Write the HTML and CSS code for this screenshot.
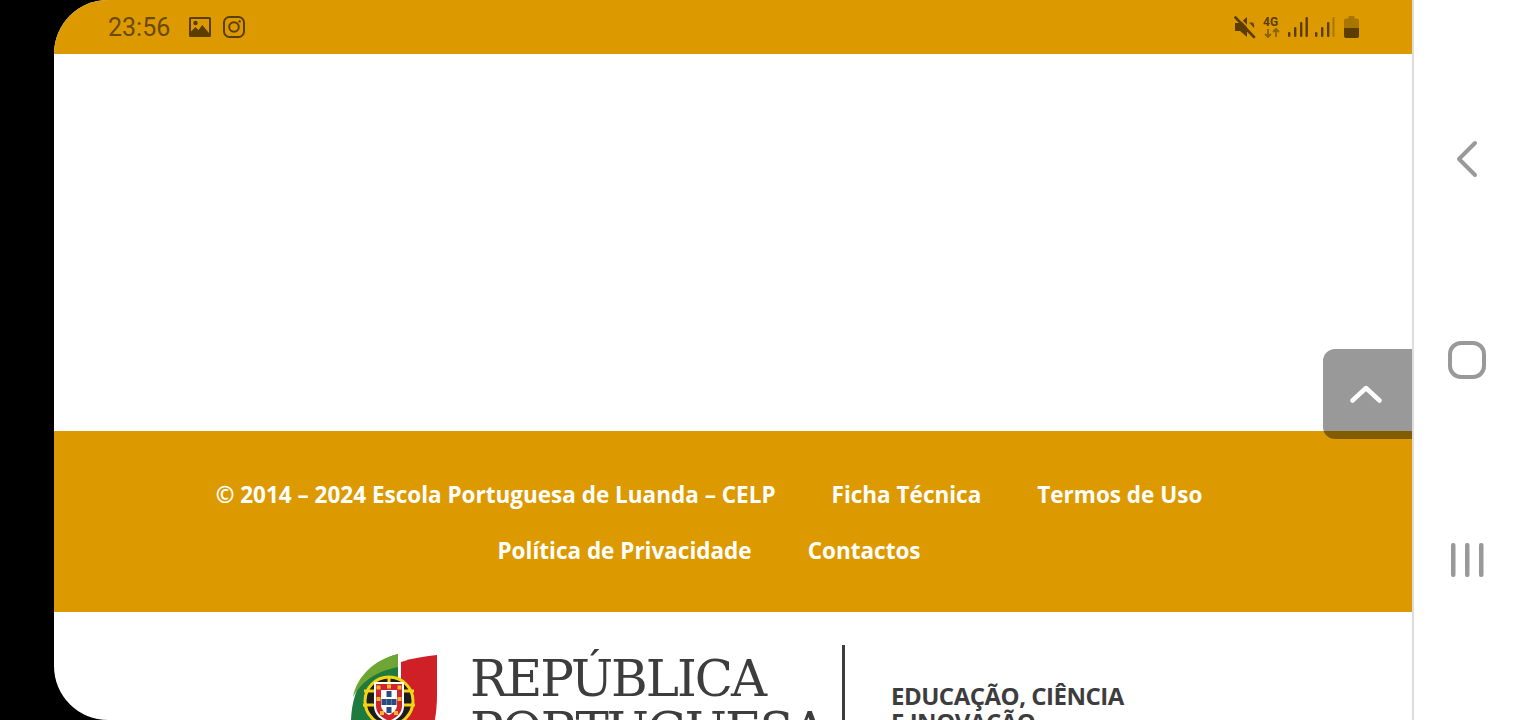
FILE: index.html
```html
<!DOCTYPE html>
<html lang="pt">
<head>
<meta charset="utf-8">
<title>Escola Portuguesa de Luanda</title>
<link rel="stylesheet" href="styles.css">
</head>
<body>
<div class="device">
  <main class="screen">
    <header class="status">
      <div class="status-left">
        <span class="time">23:56</span>
        <svg class="ico-img" width="22" height="20" viewBox="0 0 22 20"><path fill="#5c3d00" fill-rule="evenodd" d="M1.5 0h19A1.5 1.5 0 0 1 22 1.5v17a1.5 1.5 0 0 1-1.500 1.500h-19A1.500 1.500 0 0 1 0 18.500v-17A1.500 1.500 0 0 1 1.500 0zM2 2v12.500l4.500-4.500 3 3 3.800-5 6.700 8V2z"/><circle cx="6.500" cy="6" r="2.200" fill="#5c3d00"/></svg>
        <svg class="ico-ig" width="22" height="22" viewBox="0 0 22 22" fill="none" stroke="#5c3d00" stroke-width="2"><rect x="1" y="1" width="20" height="20" rx="5.500"/><circle cx="11" cy="11" r="4.800"/><circle cx="16.600" cy="5.400" r="1.200" fill="#5c3d00" stroke="none"/></svg>
      </div>
      <div class="status-right">
        <svg width="22" height="24" viewBox="0 0 22 24"><path fill="#5c3d00" d="M1 8h5l7-6v20l-7-6H1z"/><path stroke="#5c3d00" stroke-width="2.600" stroke-linecap="round" d="M1.500 2.500 20 22"/><path stroke="#dd9a00" stroke-width="1.600" d="M4 1.500 21 19.500"/><path fill="#5c3d00" d="M15 7.500l5 5.500c.5-2 .2-4-1-5.500z" opacity=".9"/></svg>
        <svg class="ico-net" width="18" height="24" viewBox="0 0 18 24"><text class="net-label" x="0" y="11">4G</text><path fill="none" stroke="#8a6200" stroke-width="1.800" d="M5 14v8M2 19l3 3 3-3M13 22v-8M10 17l3-3 3 3"/></svg>
        <svg width="20" height="22" viewBox="0 0 20 22"><g fill="#5c3d00"><rect x="0" y="16" width="2.400" height="5" rx="1"/><rect x="6" y="11" width="2.400" height="10" rx="1"/><rect x="12" y="6" width="2.400" height="15" rx="1"/><rect x="17.500" y="1" width="2.400" height="20" rx="1"/></g></svg>
        <svg width="20" height="22" viewBox="0 0 20 22"><g fill="#5c3d00"><rect x="0" y="16" width="2.400" height="5" rx="1"/><rect x="6" y="11" width="2.400" height="10" rx="1"/><rect x="12" y="6" width="2.400" height="15" rx="1"/></g><rect x="17.500" y="1" width="2" height="20" rx="1" fill="#a87600"/></svg>
        <svg class="ico-batt" width="15" height="22" viewBox="0 0 15 22"><path fill="#a87600" d="M4.500 0h6v2.500H13A2 2 0 0 1 15 4.500V12H0V4.500a2 2 0 0 1 2-2h2.500z"/><path fill="#5c3d00" d="M0 12h15v8a2 2 0 0 1-2 2H2a2 2 0 0 1-2-2z"/></svg>
      </div>
    </header>

    <section class="content"></section>

    <footer class="site-footer">
      <nav class="footer-links">
        <span class="flink">© 2014 – 2024 Escola Portuguesa de Luanda – CELP</span>
        <a class="flink">Ficha Técnica</a>
        <a class="flink">Termos de Uso</a>
        <a class="flink">Política de Privacidade</a>
        <a class="flink">Contactos</a>
      </nav>
    </footer>

    <section class="gov">
      <svg class="gov-mark" width="88" height="112" viewBox="0 0 88 112">
        <path fill="#1f7a3d" d="M47 1C20 8 0 32 0 70v42h47z"/>
        <path fill="#6fa534" d="M47 1C22 7 6 24 2 44 12 26 28 18 47 14z"/>
        <path fill="#cf2027" d="M50 9c12-4 25-6 36-7v40c0 30-8 50-22 70H50z"/>
        <circle cx="38" cy="48" r="23" fill="#1c1c1c"/>
        <circle cx="38" cy="48" r="24" fill="none" stroke="#f5d312" stroke-width="3"/>
        <path fill="none" stroke="#f5d312" stroke-width="3" d="M13 38h50M12 52h52M38 24v48"/>
        <path fill="#fff" d="M23 29h30v24c0 9-7 14-15 17-8-3-15-8-15-17z"/>
        <path fill="#d2232a" d="M25 31h26v22c0 7-6 12-13 15-7-3-13-8-13-15z"/>
        <path fill="#fff" d="M30 37h16v15c0 5-4 8-8 10-4-2-8-5-8-10z"/>
        <g fill="#2a4b80"><rect x="35.500" y="38" width="5" height="6"/><rect x="30.500" y="46" width="5" height="6"/><rect x="35.500" y="46" width="5" height="6"/><rect x="40.500" y="46" width="5" height="6"/><rect x="35.500" y="54" width="5" height="6"/></g>
        <g fill="#f2b632"><rect x="25.500" y="32.500" width="4" height="4"/><rect x="36" y="31.500" width="4" height="4"/><rect x="46.500" y="32.500" width="4" height="4"/><rect x="25.500" y="44" width="4" height="4"/><rect x="46.500" y="44" width="4" height="4"/><rect x="29" y="58" width="4" height="4"/><rect x="43" y="58" width="4" height="4"/></g>
      </svg>
      <div class="gov-name">REPÚBLICA<br>PORTUGUESA</div>
      <div class="gov-rule"></div>
      <div class="gov-dept">EDUCAÇÃO, CIÊNCIA<br>E INOVAÇÃO</div>
    </section>

    <button class="to-top" aria-label="Voltar ao topo">
      <svg width="32" height="18" viewBox="0 0 32 18" fill="none" stroke="#fff" stroke-width="4.500" stroke-linecap="round" stroke-linejoin="round"><path d="M2.500 15.500 16 3l13.500 12.500"/></svg>
    </button>
  </main>

  <aside class="navbar">
    <svg width="24" height="38" viewBox="0 0 24 38" fill="none" stroke="#999" stroke-width="4" stroke-linecap="round" stroke-linejoin="round"><path d="M20 3 4 19l16 16"/></svg>
    <svg width="38" height="38" viewBox="0 0 38 38" fill="none" stroke="#999" stroke-width="4"><rect x="2" y="2" width="34" height="34" rx="11"/></svg>
    <svg width="34" height="36" viewBox="0 0 34 36" fill="#999"><rect x="1" y="1" width="4.500" height="34" rx="2"/><rect x="15" y="1" width="4.500" height="34" rx="2"/><rect x="29" y="1" width="4.500" height="34" rx="2"/></svg>
  </aside>
</div>
</body>
</html>
```

FILE: styles.css
```css
* { box-sizing: border-box; }
html, body { margin: 0; height: 720px; overflow: hidden; background: #000; }

.device { display: flex; width: 1520px; height: 720px; padding-left: 54px; background: #000; }

.screen {
  position: relative;
  width: 1358px;
  height: 720px;
  overflow: hidden;
  display: flex;
  flex-direction: column;
  background: #fff;
  border-radius: 54px 0 0 54px;
}

.status {
  flex: none;
  height: 54px;
  background: #dd9a00;
  display: flex;
  align-items: center;
  justify-content: space-between;
  padding: 0 53px 0 54px;
}
.status-left { display: flex; align-items: center; }
.time { font: 400 25px/1 Roboto, sans-serif; color: #6b4a00; width: 81px; }
.ico-ig { margin-left: 12px; }
.status-right { display: flex; align-items: center; gap: 7px; }
.net-label { font: 700 12px Roboto, sans-serif; fill: #5c3d00; }
.ico-batt { margin-left: 2px; }

.content { flex: none; height: 377px; background: #fff; }

.site-footer {
  flex: none;
  height: 181px;
  background: #dd9a00;
  padding: 36px 48px 0 0;
}
.footer-links {
  width: 1200px;
  margin: 0 auto;
  display: flex;
  flex-wrap: wrap;
  justify-content: center;
  column-gap: 56px;
}
.flink { font: 700 22.500px/56px "Open Sans", sans-serif; color: #fff; white-space: nowrap; }

.gov {
  flex: none;
  height: 108px;
  display: flex;
  align-items: flex-start;
  padding: 33px 0 0 297px;
}
.gov-mark { flex: none; margin-top: 8px; }
.gov-name {
  margin: 8px 0 0 31px;
  width: 372px;
  font: 400 50px/52px "DejaVu Serif", serif;
  letter-spacing: -2px;
  color: #3d3d3d;
}
.gov-rule { flex: none; width: 3px; height: 80px; background: #3d3d3d; }
.gov-dept {
  margin: 38px 0 0 46px;
  font: 700 24px/26px "Open Sans", sans-serif;
  letter-spacing: -.5px;
  color: #3d3d3d;
  white-space: nowrap;
}

.to-top {
  position: absolute;
  right: 0;
  top: 349px;
  width: 89px;
  height: 90px;
  padding: 0 4px 0 0;
  border: 0;
  border-radius: 12px 0 0 12px;
  background: rgba(0, 0, 0, .4);
  display: flex;
  align-items: center;
  justify-content: center;
}

.navbar {
  flex: none;
  width: 108px;
  height: 720px;
  background: #fff;
  border-left: 2px solid #ddd;
  display: flex;
  flex-direction: column;
  align-items: center;
  padding-top: 140px;
  gap: 163px;
}
.navbar svg { flex: none; }
```
